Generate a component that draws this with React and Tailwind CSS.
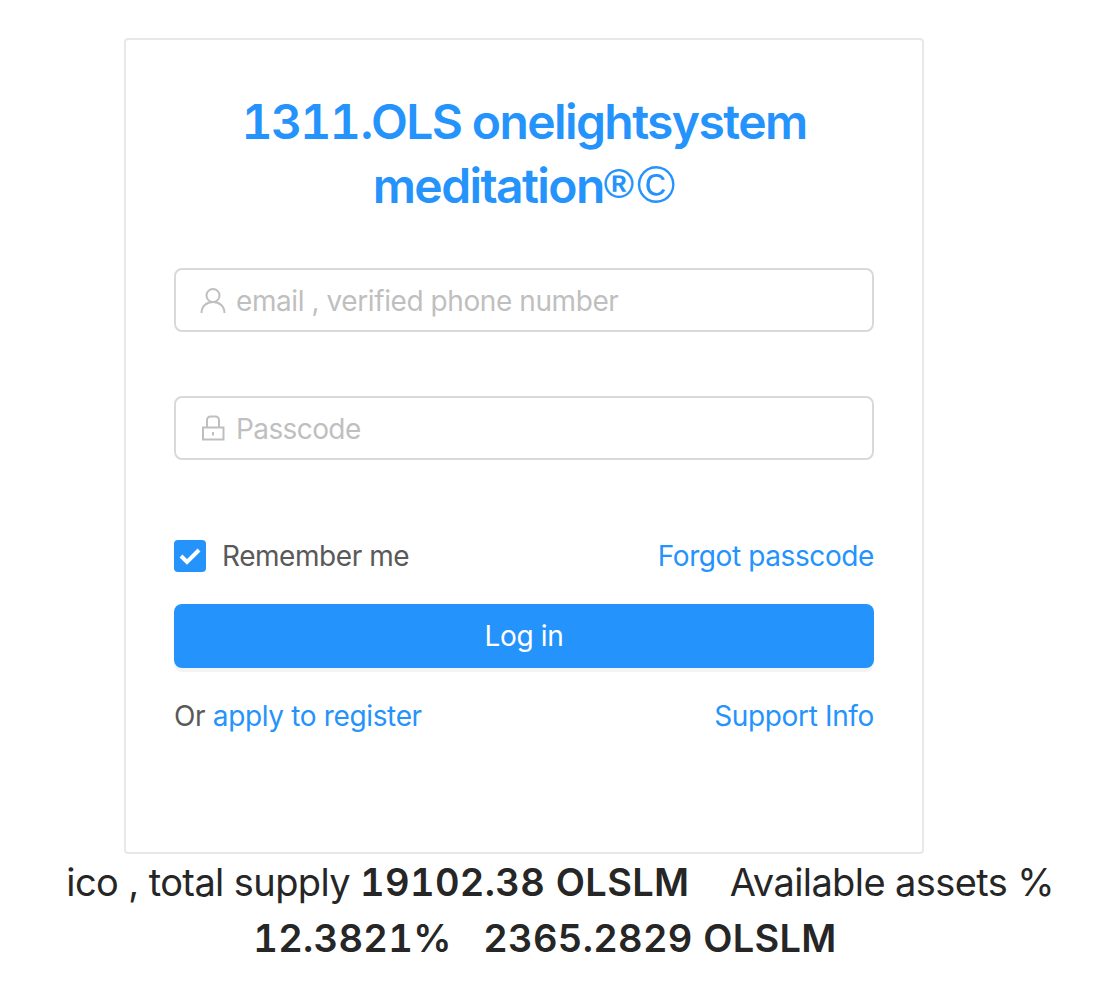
import React from "react";

const FONT = "font-['Inter','Liberation_Sans',sans-serif]";

function UserIcon() {
  return (
    <svg width="26" height="26" viewBox="0 0 26 26" fill="none" stroke="#bfbfbf" strokeWidth="2">
      <circle cx="13" cy="8.500" r="6.500" />
      <path d="M1.500 26c0-6.500 5-11 11.500-11s11.500 4.500 11.500 11" />
    </svg>
  );
}

function LockIcon() {
  return (
    <svg width="26" height="26" viewBox="0 0 26 26" fill="none" stroke="#bfbfbf" strokeWidth="2">
      <rect x="3" y="12.500" width="20.500" height="12" />
      <path d="M7 12.500V5a3.500 3.500 0 0 1 3.500-3.500h5A3.500 3.500 0 0 1 19 5v7.500" />
      <path d="M13 17v3.500" />
    </svg>
  );
}

export default function App() {
  return (
    <div className={`${FONT} w-[1118px] h-[982px] bg-white flex flex-col`}>
      <div className="ml-[124px] mt-[38px] w-[800px] h-[816px] border-2 border-[#e8e8e8] rounded-[4px] px-[48px] pt-[50px]">
        <h1 className="text-center text-[#2593fc] text-[48px] leading-[64px] font-semibold tracking-[-1.6px]">
          <span className="tabular-nums">1311</span>.OLS onelightsystem meditation
          <span className="font-['Liberation_Sans',sans-serif] font-bold tracking-[0px] leading-[0] text-[41px] align-[5px]">®</span>
          <span className="ml-[3px] font-['Liberation_Sans',sans-serif] font-normal tracking-[0px] leading-[0] text-[52px]">©</span>
        </h1>
        <div className="mt-[50px] h-[64px] border-2 border-[#d9d9d9] rounded-[8px] flex items-center pl-[24px] gap-[10px]">
          <UserIcon />
          <span className="pt-[2px] text-[28px] text-[#bfbfbf] tracking-[-0.42px]">email , verified phone number</span>
        </div>
        <div className="mt-[64px] h-[64px] border-2 border-[#d9d9d9] rounded-[8px] flex items-center pl-[24px] gap-[10px]">
          <LockIcon />
          <span className="pt-[2px] text-[28px] text-[#bfbfbf] tracking-[-0.6px]">Passcode</span>
        </div>
        <div className="mt-[64px] flex items-center justify-between h-[64px]">
          <div className="flex items-center gap-[16px]">
            <span className="w-[32px] h-[32px] rounded-[4px] bg-[#2593fc] flex items-center justify-center">
              <svg width="22" height="18" viewBox="0 0 22 18" fill="none" stroke="#fff" strokeWidth="4">
                <path d="M2 9l6 6L20 3" />
              </svg>
            </span>
            <span className="text-[28px] text-[#595959] tracking-[-0.45px]">Remember me</span>
          </div>
          <span className="text-[28px] text-[#2593fc] tracking-[-0.4px]">Forgot passcode</span>
        </div>
        <div className="mt-[16px] h-[64px] rounded-[8px] bg-[#2593fc] shadow-[0_4px_0_rgba(0,0,0,0.045)] text-white text-[28px] tracking-[-0.3px] flex items-center justify-center">
          Log in
        </div>
        <div className="mt-[16px] h-[64px] flex items-center justify-between text-[28px] tracking-[-0.35px]">
          <span className="text-[#595959]">
            Or <span className="text-[#2593fc]">apply to register</span>
          </span>
          <span className="text-[#2593fc]">Support Info</span>
        </div>
      </div>
      <div className="w-[1090px] text-center text-[38px] leading-[56px] text-[#262626] tracking-[-0.6px]">
        {"\u00a0\u00a0\u00a0"}ico , total supply <b className="font-semibold tabular-nums tracking-[0.35px]">19102.38 OLSLM</b>{"\u00a0\u00a0\u00a0"} Available assets %
        <br />
        <b className="font-semibold tabular-nums tracking-[0.3px]">12.3821%{"\u00a0\u00a0\u00a0"}2365.2829 OLSLM</b>
      </div>
    </div>
  );
}
